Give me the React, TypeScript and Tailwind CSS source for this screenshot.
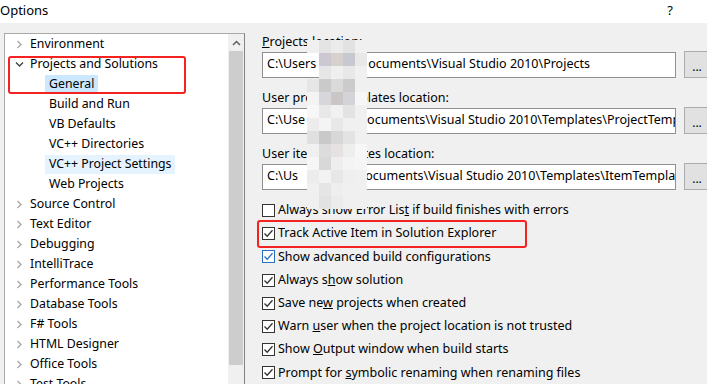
import React from 'react';

const font = { fontFamily: '"Noto Sans", "Liberation Sans", sans-serif' };

type TreeItem = { label: string; level: 0 | 1; expanded?: boolean; selected?: boolean; hover?: boolean };

const tree: TreeItem[] = [
  { label: 'Environment', level: 0 },
  { label: 'Projects and Solutions', level: 0, expanded: true },
  { label: 'General', level: 1, selected: true },
  { label: 'Build and Run', level: 1 },
  { label: 'VB Defaults', level: 1 },
  { label: 'VC++ Directories', level: 1 },
  { label: 'VC++ Project Settings', level: 1, hover: true },
  { label: 'Web Projects', level: 1 },
  { label: 'Source Control', level: 0 },
  { label: 'Text Editor', level: 0 },
  { label: 'Debugging', level: 0 },
  { label: 'IntelliTrace', level: 0 },
  { label: 'Performance Tools', level: 0 },
  { label: 'Database Tools', level: 0 },
  { label: 'F# Tools', level: 0 },
  { label: 'HTML Designer', level: 0 },
  { label: 'Office Tools', level: 0 },
  { label: 'Test Tools', level: 0 },
];

const Chevron = ({ open }: { open?: boolean }) =>
  open ? (
    <svg width="9" height="9" viewBox="0 0 9 9" className="shrink-0">
      <path d="M1 2.5 L4.5 6 L8 2.5" fill="none" stroke="#404040" strokeWidth="1.3" />
    </svg>
  ) : (
    <svg width="9" height="9" viewBox="0 0 9 9" className="shrink-0">
      <path d="M2.5 1 L6 4.5 L2.5 8" fill="none" stroke="#a6a6a6" strokeWidth="1.3" />
    </svg>
  );

const CheckBox = ({ checked, blue }: { checked?: boolean; blue?: boolean }) => (
  <span
    className={`w-[13px] h-[13px] shrink-0 border bg-white flex items-center justify-center ${
      blue ? 'border-[#2b6fc4]' : 'border-[#333333]'
    }`}
  >
    {checked && (
      <svg width="11" height="11" viewBox="0 0 11 11">
        <path
          d="M1.5 5.5 L4.2 8.3 L9.5 2.3"
          fill="none"
          stroke={blue ? '#2b6fc4' : '#333333'}
          strokeWidth="1.3"
        />
      </svg>
    )}
  </span>
);

const options: { text: React.ReactNode; checked: boolean; blue?: boolean }[] = [
  { text: <>Always show Error Lis<u>t</u> if build finishes with errors</>, checked: false },
  { text: <>Track Active Item in Solution Explorer</>, checked: true },
  { text: <>Show advanced build configurations</>, checked: true, blue: true },
  { text: <>Always s<u>h</u>ow solution</>, checked: true },
  { text: <>Save ne<u>w</u> projects when created</>, checked: true },
  { text: <>Warn <u>u</u>ser when the project location is not trusted</>, checked: true },
  { text: <>Show <u>O</u>utput window when build starts</>, checked: true },
  { text: <>Prompt for <u>s</u>ymbolic renaming when renaming files</>, checked: true },
];

const PathField = ({ head, gap, tail }: { head: string; gap: number; tail: string }) => (
  <div className="flex items-center gap-[8px]">
    <div className="w-[414px] h-[26px] bg-white border border-[#8f8f8f] flex items-center pl-[4px] overflow-hidden whitespace-nowrap text-[12.5px] text-black">
      <span>{head}</span>
      <span className="inline-block shrink-0" style={{ width: gap }} />
      <span>{tail}</span>
    </div>
    <button className="w-[26px] h-[27px] shrink-0 bg-[#e1e1e1] border border-[#adadad] text-[12px] leading-none pt-[4px] text-black">
      ...
    </button>
  </div>
);

// pixelated blur over the user name
const T = 'transparent';
const mosaic: string[][] = [
  ['#f0f0f0', '#e4e4e4', '#ebebeb', '#e2e2e2', '#f0f0f0'],
  [T, '#cbc8d2', '#d6d1cc', '#c8c8d0', '#e8e8e8'],
  [T, '#e6e6e6', '#efefef', '#e8e8e8', '#f0f0f0'],
  ['#e6e6e6', '#cacaca', '#dadada', '#cbcbcb', '#f0f0f0'],
  ['#f4f4f4', '#d7d7db', '#cbc6c6', '#d4d4d8', '#f6f6f6'],
  ['#f7f7f7', '#e8e8e8', '#f1f1f1', '#e3e3e3', '#f0f0f0'],
  ['#ececec', '#f4f4f4', '#e8e8e8', '#f0f0f0', '#f0f0f0'],
  ['#e0e0e0', '#c9c9c9', '#d7d7d7', '#e3e3e3', '#f0f0f0'],
  ['#f0f0f0', '#dcdcdc', '#e6e2e2', '#eeeeee', '#f7f7f7'],
  ['#f6f6f6', '#d8d8d8', '#eeeeee', '#f4f4f4', '#f6f6f6'],
  ['#ececec', '#f3f3f3', '#e7e7e7', '#efefef', '#f0f0f0'],
  ['#f0f0f0', '#e5e5e5', '#eeeeee', '#f0f0f0', '#f0f0f0'],
  ['#f0f0f0', '#e2e2e2', '#ebebeb', '#f0f0f0', '#f0f0f0'],
];

export default function App() {
  return (
    <div className="w-[707px] h-[384px] overflow-hidden bg-[#f0f0f0] relative text-black" style={font}>
      {/* Title bar */}
      <div className="h-[23px] bg-white flex items-center justify-between">
        <span className="text-[13px] leading-none pb-[3px]">Options</span>
        <span className="text-[13px] leading-none pr-[34px] pb-[2px]">?</span>
      </div>

      <div className="flex pt-[10px]">
        {/* Tree panel */}
        <div className="ml-[4px] w-[241px] h-[400px] border border-[#a9a9a9] border-r-[#838383] flex shrink-0">
          <div className="flex-1 bg-white flex flex-col">
            {tree.map((item) => (
              <div key={item.label} className="h-[20px] flex items-center text-[12.3px] whitespace-nowrap">
                {item.level === 0 ? (
                  <div className="flex items-center pl-[10px]">
                    <Chevron open={item.expanded} />
                    <span className="ml-[6px]">{item.label}</span>
                  </div>
                ) : (
                  <div
                    className={`ml-[40px] h-[19px] flex items-center px-[4px] ${
                      item.selected ? 'bg-[#cce8ff]' : item.hover ? 'bg-[#e5f3ff]' : ''
                    }`}
                  >
                    {item.label}
                  </div>
                )}
              </div>
            ))}
          </div>
          <div className="w-[16px] flex flex-col bg-[#f0f0f0]">
            <div className="h-[17px] flex items-center justify-center">
              <svg width="9" height="6" viewBox="0 0 9 6">
                <path d="M1 5 L4.5 1.5 L8 5" fill="none" stroke="#606060" strokeWidth="1.5" />
              </svg>
            </div>
            <div className="h-[314px] bg-[#cdcdcd] mx-[1px]" />
          </div>
        </div>

        {/* Right side */}
        <div className="ml-[17px] flex flex-col text-[12.5px]">
          <div className="h-[18px] flex items-center">
            <span><u>P</u>rojects location:</span>
          </div>
          <PathField head="C:\Users" gap={52} tail="ocuments\Visual Studio 2010\Projects" />
          <div className="h-[18px] flex items-center mt-[11px]">User project templates location:</div>
          <PathField head="C:\Use" gap={62} tail="ocuments\Visual Studio 2010\Templates\ProjectTemplates" />
          <div className="h-[18px] flex items-center mt-[11px]">User item templates location:</div>
          <PathField head="C:\Us" gap={58} tail="Documents\Visual Studio 2010\Templates\ItemTemplates" />

          <div className="flex flex-col mt-[9px]">
            {options.map((o, i) => (
              <div key={i} className="h-[23.2px] flex items-center gap-[3px] whitespace-nowrap">
                <CheckBox checked={o.checked} blue={o.blue} />
                <span>{o.text}</span>
              </div>
            ))}
          </div>
        </div>
      </div>

      {/* Mosaic blur */}
      <div className="absolute left-[307px] top-[40px] flex flex-col">
        {mosaic.map((row, r) => (
          <div key={r} className="flex">
            {row.map((c, k) => (
              <div key={k} className="w-[12px] h-[13px]" style={{ background: c }} />
            ))}
          </div>
        ))}
      </div>

      {/* Red annotation boxes */}
      <div className="absolute left-[8px] top-[56px] w-[178px] h-[38px] border-[2px] border-[#f52222] rounded-[3px]" />
      <div className="absolute left-[257px] top-[220px] w-[270px] h-[28px] border-[2px] border-[#f52222] rounded-[3px]" />
    </div>
  );
}
